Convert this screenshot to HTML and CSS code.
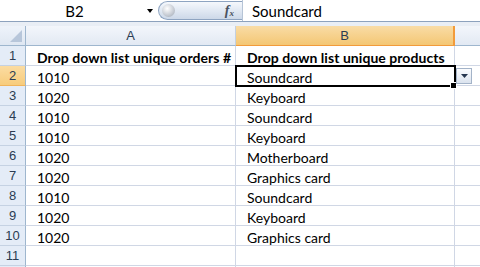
FILE: index.html
```html
<!DOCTYPE html>
<html lang="en">
<head>
    <meta charset="UTF-8">
    <title>Drop down list unique</title>
    <link rel="stylesheet" href="styles.css">
</head>
<body>

    <div class="formula-bar">
        <div class="name-box">
            <span class="name-text">B2</span>
            <span class="name-arrow"></span>
        </div>
        <div class="fx-box">
            <span class="fx-ball"></span>
            <span class="fx-label">f<sub>x</sub></span>
        </div>
        <div class="formula-input">Soundcard</div>
    </div>
    <div class="bar-gap"></div>

    <div class="sheet">
        <div class="grid">
            <div class="corner">
                <svg width="12" height="12" viewBox="0 0 12 12"><polygon points="12,0 12,12 0,12" fill="#b7c6da"/></svg>
            </div>
            <div class="col-head">A</div>
            <div class="col-head selected">B</div>
            <div class="col-head last"></div>

            <div class="row-head">1</div>
            <div class="cell bold">Drop down list unique orders #</div>
            <div class="cell bold">Drop down list unique products</div>
            <div class="cell last"></div>

            <div class="row-head selected">2</div>
            <div class="cell">1010</div>
            <div class="cell">Soundcard</div>
            <div class="cell last"></div>

            <div class="row-head">3</div>
            <div class="cell">1020</div>
            <div class="cell">Keyboard</div>
            <div class="cell last"></div>

            <div class="row-head">4</div>
            <div class="cell">1010</div>
            <div class="cell">Soundcard</div>
            <div class="cell last"></div>

            <div class="row-head">5</div>
            <div class="cell">1010</div>
            <div class="cell">Keyboard</div>
            <div class="cell last"></div>

            <div class="row-head">6</div>
            <div class="cell">1020</div>
            <div class="cell">Motherboard</div>
            <div class="cell last"></div>

            <div class="row-head">7</div>
            <div class="cell">1020</div>
            <div class="cell">Graphics card</div>
            <div class="cell last"></div>

            <div class="row-head">8</div>
            <div class="cell">1010</div>
            <div class="cell">Soundcard</div>
            <div class="cell last"></div>

            <div class="row-head">9</div>
            <div class="cell">1020</div>
            <div class="cell">Keyboard</div>
            <div class="cell last"></div>

            <div class="row-head">10</div>
            <div class="cell">1020</div>
            <div class="cell">Graphics card</div>
            <div class="cell last"></div>

            <div class="row-head">11</div>
            <div class="cell"></div>
            <div class="cell"></div>
            <div class="cell last"></div>

            <div class="row-head"></div>
            <div class="cell"></div>
            <div class="cell"></div>
            <div class="cell last"></div>
        </div>

        <!-- active cell B2 with its list button -->
        <div class="active-cell"><span class="fill-handle"></span></div>
        <div class="list-button">
            <svg width="7" height="4" viewBox="0 0 7 4"><polygon points="0,0 7,0 3.5,4" fill="#26364f"/></svg>
        </div>
    </div>

</body>
</html>
```

FILE: styles.css
```css
body {
    margin: 0;
    width: 480px;
    height: 267px;
    overflow: hidden;
    background-color: #ffffff;
    font-family: Lato, "Liberation Sans", sans-serif;
}

/* formula bar */
.formula-bar {
    display: flex;
    height: 21px;
    border-bottom: 1px solid #8da2bd;
    background-color: #ffffff;
}

.name-box {
    width: 158px;
    display: flex;
    align-items: center;
    font-size: 15px;
    color: #000;
}

.name-text {
    flex: 1;
    text-align: center;
    padding-left: 2px;
}

.name-arrow {
    width: 0;
    height: 0;
    margin-right: 5px;
    border-left: 3px solid transparent;
    border-right: 3px solid transparent;
    border-top: 4px solid #000;
}

.fx-box {
    width: 84px;
    height: 19px;
    margin-top: 1px;
    display: flex;
    align-items: center;
    justify-content: space-between;
    box-sizing: border-box;
    border: 1px solid #8ea4c1;
    border-right: none;
    border-radius: 10px 0 0 10px;
    background: linear-gradient(#f5f8fc, #dfe7f2 55%, #ccd8e8);
}

.fx-ball {
    width: 13px;
    height: 13px;
    margin-left: 3px;
    border-radius: 50%;
    background: radial-gradient(circle at 40% 35%, #ffffff, #c9ced6 55%, #9aa3ae);
}

.fx-label {
    margin-right: 8px;
    font-family: "Liberation Serif", serif;
    font-style: italic;
    font-weight: bold;
    font-size: 14px;
    color: #4a5260;
}

.fx-label sub {
    font-size: 9px;
    vertical-align: -1px;
}

.formula-input {
    flex: 1;
    display: flex;
    align-items: center;
    padding-left: 9px;
    border-left: 1px solid #b6c4d6;
    font-size: 15px;
    color: #000;
}

.bar-gap {
    height: 4px;
    background-color: #e9eef5;
}

/* sheet grid */
.sheet {
    position: relative;
}

.grid {
    display: grid;
    grid-template-columns: 26px 210px 219px 25px;
    grid-auto-rows: 20px;
}

.corner, .col-head, .row-head, .cell {
    box-sizing: border-box;
}

.corner {
    display: flex;
    align-items: flex-end;
    justify-content: flex-end;
    padding: 0 3px 3px 0;
    background: linear-gradient(#eef3fa, #dfe7f2);
    border-right: 1px solid #9eb6ce;
    border-bottom: 1px solid #9eb6ce;
}

.col-head {
    display: flex;
    align-items: center;
    justify-content: center;
    font-family: "Liberation Sans", sans-serif;
    font-size: 13px;
    color: #2b3c52;
    background: linear-gradient(#f3f6fb, #e2e9f3);
    border-right: 1px solid #c3d0e0;
    border-bottom: 1px solid #9eb6ce;
}

.col-head.selected {
    background: linear-gradient(#f9dca6, #f4c774);
    border-right: 2px solid #f29b3b;
    border-bottom: 1px solid #f29b3b;
}

.col-head.last {
    border-right: none;
}

.row-head {
    display: flex;
    align-items: center;
    justify-content: center;
    font-family: "Liberation Sans", sans-serif;
    font-size: 13px;
    color: #2b3c52;
    background-color: #e4ecf7;
    border-right: 1px solid #9eb6ce;
    border-bottom: 1px solid #c5d2e3;
}

.row-head.selected {
    background: linear-gradient(#fbdca2, #f7cc7c);
    border-bottom: 1px solid #f0b45c;
}

.cell {
    padding: 3px 0 0 11px;
    font-size: 14px;
    color: #000;
    white-space: nowrap;
    overflow: hidden;
    border-right: 1px solid #d0d7e5;
    border-bottom: 1px solid #d0d7e5;
}

.cell.bold {
    font-weight: bold;
    letter-spacing: 0.05px;
    overflow: visible;
}

.cell.last {
    border-right: none;
}

.active-cell {
    position: absolute;
    left: 235px;
    top: 39px;
    width: 221px;
    height: 22px;
    box-sizing: border-box;
    border: 2px solid #000;
}

.fill-handle {
    position: absolute;
    right: -3px;
    bottom: -4px;
    width: 5px;
    height: 5px;
    background-color: #000;
    border: 1px solid #fff;
}

.list-button {
    position: absolute;
    left: 456px;
    top: 42px;
    width: 16px;
    height: 16px;
    box-sizing: border-box;
    display: flex;
    align-items: center;
    justify-content: center;
    border: 1px solid #a3b3c8;
    background: linear-gradient(#fbfcfe, #dbe3ee);
}
```
